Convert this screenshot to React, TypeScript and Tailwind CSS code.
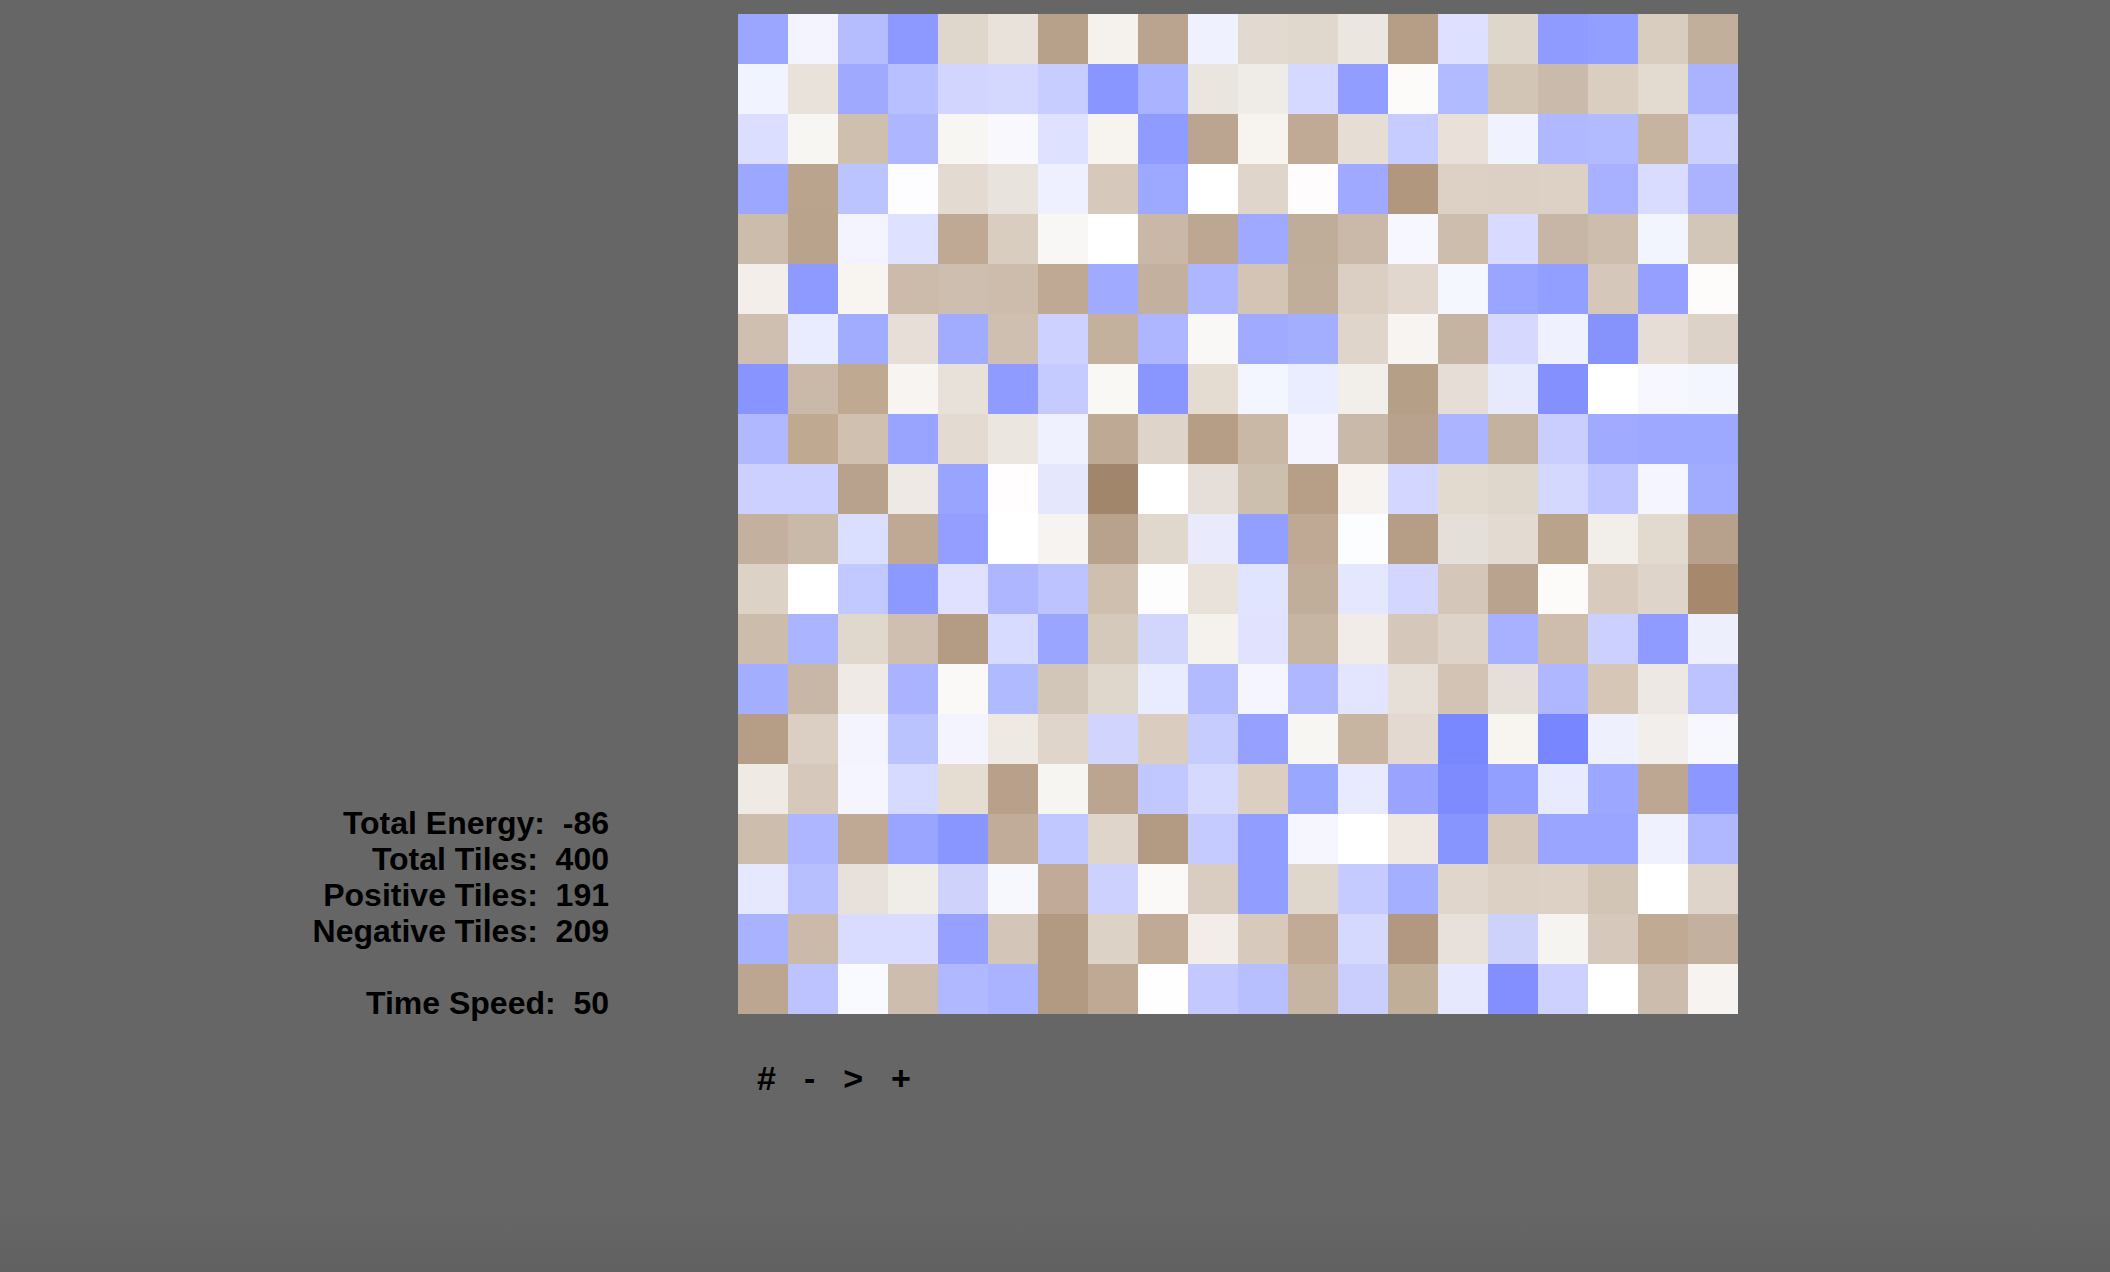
const tiles = [
  "bg-[#9aa6ff]", "bg-[#f3f4ff]", "bg-[#b5bdff]", "bg-[#8d99ff]", "bg-[#dfd6cc]", "bg-[#e8e2db]", "bg-[#b8a18a]", "bg-[#f5f2ed]", "bg-[#bba48f]", "bg-[#eff1ff]", "bg-[#e2dad0]", "bg-[#e0d8cd]", "bg-[#ebe6e0]", "bg-[#b59d86]", "bg-[#dde0ff]", "bg-[#dfd6cb]", "bg-[#8f9bff]", "bg-[#939fff]", "bg-[#d9cdc0]", "bg-[#c1af9c]",
  "bg-[#f1f3ff]", "bg-[#e9e2db]", "bg-[#9faaff]", "bg-[#b9c0ff]", "bg-[#d2d6ff]", "bg-[#d4d8ff]", "bg-[#c8cdff]", "bg-[#8a96ff]", "bg-[#aab3ff]", "bg-[#ebe5df]", "bg-[#efebe6]", "bg-[#d5d9ff]", "bg-[#929eff]", "bg-[#fcfbf9]", "bg-[#b1bbff]", "bg-[#d3c5b6]", "bg-[#cabaab]", "bg-[#dacec0]", "bg-[#e3dad0]", "bg-[#abb3ff]",
  "bg-[#dbdeff]", "bg-[#f8f6f3]", "bg-[#cfbfaf]", "bg-[#adb6ff]", "bg-[#f8f6f3]", "bg-[#f9f9fd]", "bg-[#dee1ff]", "bg-[#f7f4ef]", "bg-[#8f9bff]", "bg-[#bba490]", "bg-[#f7f4f0]", "bg-[#c0aa95]", "bg-[#e6ded4]", "bg-[#c6ccff]", "bg-[#e8e0d9]", "bg-[#f0f2fe]", "bg-[#b0b9ff]", "bg-[#b2bbff]", "bg-[#c6b4a1]", "bg-[#cbd0ff]",
  "bg-[#9ca8ff]", "bg-[#baa48d]", "bg-[#bcc4ff]", "bg-[#fdfdff]", "bg-[#e3dbd2]", "bg-[#e9e3dd]", "bg-[#eef0ff]", "bg-[#d6c9bb]", "bg-[#9da9ff]", "bg-[#ffffff]", "bg-[#dfd5ca]", "bg-[#fefcfc]", "bg-[#9ea9ff]", "bg-[#b0977e]", "bg-[#ddd1c5]", "bg-[#dcd0c4]", "bg-[#ddd1c5]", "bg-[#a8b1ff]", "bg-[#d9dcff]", "bg-[#abb3ff]",
  "bg-[#ccbcab]", "bg-[#b9a38c]", "bg-[#f3f4ff]", "bg-[#dee1ff]", "bg-[#bfa994]", "bg-[#d9cdc0]", "bg-[#f9f7f5]", "bg-[#ffffff]", "bg-[#c9b8a7]", "bg-[#bda692]", "bg-[#9ea9ff]", "bg-[#bfac99]", "bg-[#cab9a8]", "bg-[#f7f8ff]", "bg-[#cdbdad]", "bg-[#d8dbff]", "bg-[#c7b5a5]", "bg-[#cdbdad]", "bg-[#f3f5fe]", "bg-[#d2c6b8]",
  "bg-[#f4eeea]", "bg-[#8e9aff]", "bg-[#f8f4f0]", "bg-[#ccbbab]", "bg-[#cebeaf]", "bg-[#cdbcac]", "bg-[#bfa995]", "bg-[#a0abff]", "bg-[#c3b09e]", "bg-[#adb6ff]", "bg-[#d3c4b5]", "bg-[#c1ae9a]", "bg-[#dbcfc3]", "bg-[#e1d7ce]", "bg-[#f5f7ff]", "bg-[#99a5ff]", "bg-[#939fff]", "bg-[#d5c8ba]", "bg-[#959fff]", "bg-[#fefbfb]",
  "bg-[#cfbfb0]", "bg-[#e9ebff]", "bg-[#a1acff]", "bg-[#e6ded7]", "bg-[#a1acff]", "bg-[#cfbfb0]", "bg-[#ccd1ff]", "bg-[#c3b09d]", "bg-[#adb6ff]", "bg-[#faf8f7]", "bg-[#a0abff]", "bg-[#a3aeff]", "bg-[#dfd5ca]", "bg-[#f8f4f1]", "bg-[#c6b4a2]", "bg-[#d6d9fd]", "bg-[#f0f1ff]", "bg-[#8793fc]", "bg-[#e6ddd6]", "bg-[#ddd2c7]",
  "bg-[#8894ff]", "bg-[#cab9a9]", "bg-[#bfa991]", "bg-[#f8f4f1]", "bg-[#e7e1da]", "bg-[#8f9bff]", "bg-[#c5caff]", "bg-[#f9f8f5]", "bg-[#8a96ff]", "bg-[#e4dbd1]", "bg-[#f3f6ff]", "bg-[#e9edff]", "bg-[#f2eeea]", "bg-[#b69f87]", "bg-[#e5ddd6]", "bg-[#e7e9fd]", "bg-[#8590ff]", "bg-[#ffffff]", "bg-[#f7f8ff]", "bg-[#f3f6fe]",
  "bg-[#b0b9ff]", "bg-[#bfa991]", "bg-[#cfc0b0]", "bg-[#98a4ff]", "bg-[#e3dbd1]", "bg-[#ece6e0]", "bg-[#eff1fe]", "bg-[#bea995]", "bg-[#ded4c9]", "bg-[#b69e86]", "bg-[#c8b8a5]", "bg-[#f3f4ff]", "bg-[#c9b9a8]", "bg-[#b8a18d]", "bg-[#abb4ff]", "bg-[#c4b2a0]", "bg-[#c9ceff]", "bg-[#a0aaff]", "bg-[#9ea8ff]", "bg-[#9da8ff]",
  "bg-[#cbd0ff]", "bg-[#cbd0ff]", "bg-[#b8a18d]", "bg-[#eee9e4]", "bg-[#98a4ff]", "bg-[#fffdfe]", "bg-[#e5e8fd]", "bg-[#a2866b]", "bg-[#ffffff]", "bg-[#e6dfd9]", "bg-[#cdbfae]", "bg-[#b69e87]", "bg-[#f6f3f0]", "bg-[#d3d7ff]", "bg-[#e2d9cf]", "bg-[#e0d7cc]", "bg-[#d4d8ff]", "bg-[#bfc5ff]", "bg-[#f4f5ff]", "bg-[#a1acff]",
  "bg-[#c3b09e]", "bg-[#c9b9a8]", "bg-[#dadeff]", "bg-[#bfa995]", "bg-[#939eff]", "bg-[#ffffff]", "bg-[#f6f3f0]", "bg-[#b9a28d]", "bg-[#e0d7cd]", "bg-[#e9ebfd]", "bg-[#939fff]", "bg-[#c0a994]", "bg-[#fcfdff]", "bg-[#b59e85]", "bg-[#e5dfd9]", "bg-[#e3dbd2]", "bg-[#b9a38b]", "bg-[#f2efeb]", "bg-[#e2d9cf]", "bg-[#b7a08c]",
  "bg-[#dcd2c6]", "bg-[#ffffff]", "bg-[#c2c9ff]", "bg-[#8c99ff]", "bg-[#dfe1ff]", "bg-[#adb6ff]", "bg-[#bcc3ff]", "bg-[#cfbfae]", "bg-[#fdfdfe]", "bg-[#e8e2db]", "bg-[#e0e4ff]", "bg-[#c0ae9b]", "bg-[#e5e7ff]", "bg-[#d3d7ff]", "bg-[#d4c6b9]", "bg-[#b9a38e]", "bg-[#fdfbf9]", "bg-[#d8cbbe]", "bg-[#ded4c9]", "bg-[#a6896d]",
  "bg-[#ccbcac]", "bg-[#abb5ff]", "bg-[#e1d8cd]", "bg-[#cfbfb0]", "bg-[#b49c84]", "bg-[#d7dbff]", "bg-[#9aa5ff]", "bg-[#d5c9bb]", "bg-[#d2d5fc]", "bg-[#f5f2ee]", "bg-[#e1e3fe]", "bg-[#c6b5a2]", "bg-[#f1ece7]", "bg-[#d5c7b9]", "bg-[#ddd3c9]", "bg-[#a7b1ff]", "bg-[#cebdad]", "bg-[#ccd0ff]", "bg-[#8f9bfe]", "bg-[#edeffd]",
  "bg-[#a3aeff]", "bg-[#c8b7a6]", "bg-[#efeae5]", "bg-[#a9b3ff]", "bg-[#faf9f7]", "bg-[#b0baff]", "bg-[#d2c6b9]", "bg-[#dfd6cc]", "bg-[#e9ebfe]", "bg-[#b3bbff]", "bg-[#f4f5ff]", "bg-[#afb8ff]", "bg-[#e3e5fe]", "bg-[#e6dfd7]", "bg-[#d2c3b4]", "bg-[#e6dfd9]", "bg-[#afb7ff]", "bg-[#d5c6b5]", "bg-[#ede8e3]", "bg-[#bcc3ff]",
  "bg-[#b69e86]", "bg-[#dacfc2]", "bg-[#f3f4fe]", "bg-[#bbc3ff]", "bg-[#f3f4fe]", "bg-[#efe9e4]", "bg-[#dfd5cb]", "bg-[#d1d5fe]", "bg-[#dacdc0]", "bg-[#c7ccfe]", "bg-[#96a1ff]", "bg-[#f7f6f3]", "bg-[#c7b5a2]", "bg-[#e3d9d0]", "bg-[#7a88ff]", "bg-[#f8f5f1]", "bg-[#7886ff]", "bg-[#eef0fd]", "bg-[#f2eeeb]", "bg-[#f7f8fe]",
  "bg-[#f0eae5]", "bg-[#d6c9bb]", "bg-[#f4f5fe]", "bg-[#d6dafe]", "bg-[#e5ddd2]", "bg-[#b8a08b]", "bg-[#f7f5f1]", "bg-[#bca590]", "bg-[#c1c7ff]", "bg-[#d5d9fd]", "bg-[#dccfc2]", "bg-[#9aa7ff]", "bg-[#e8ebfe]", "bg-[#9aa4ff]", "bg-[#7e8bff]", "bg-[#939fff]", "bg-[#e8ebfe]", "bg-[#9ca7ff]", "bg-[#bea792]", "bg-[#8c98ff]",
  "bg-[#cdbdac]", "bg-[#adb6ff]", "bg-[#bfa994]", "bg-[#9aa5ff]", "bg-[#8a96ff]", "bg-[#c0ac98]", "bg-[#c1c7ff]", "bg-[#dfd5ca]", "bg-[#b39a82]", "bg-[#c6cbff]", "bg-[#929eff]", "bg-[#f5f6ff]", "bg-[#ffffff]", "bg-[#eee7e2]", "bg-[#8795ff]", "bg-[#d5c8ba]", "bg-[#9aa5ff]", "bg-[#9aa5ff]", "bg-[#eff2fe]", "bg-[#b0b8ff]",
  "bg-[#e6e8fe]", "bg-[#b7bfff]", "bg-[#e8e0da]", "bg-[#f0ece7]", "bg-[#cfd3fc]", "bg-[#f7f8fe]", "bg-[#c1aa97]", "bg-[#cdd1fe]", "bg-[#faf9f7]", "bg-[#d9ccc0]", "bg-[#929eff]", "bg-[#e0d7cc]", "bg-[#c5cbfe]", "bg-[#a5afff]", "bg-[#e0d6cb]", "bg-[#dcd0c4]", "bg-[#ddd1c5]", "bg-[#d3c5b6]", "bg-[#ffffff]", "bg-[#ded4c9]",
  "bg-[#a8b2ff]", "bg-[#cbbaaa]", "bg-[#d9dcfe]", "bg-[#d9dcfe]", "bg-[#96a1ff]", "bg-[#d3c5b7]", "bg-[#b29981]", "bg-[#ddd2c6]", "bg-[#c0aa95]", "bg-[#f2ede9]", "bg-[#d7cabc]", "bg-[#c1aa96]", "bg-[#d5d9fe]", "bg-[#b29880]", "bg-[#e8e0da]", "bg-[#cdd2fb]", "bg-[#f6f4f1]", "bg-[#d6c9bb]", "bg-[#c0aa94]", "bg-[#c3b09e]",
  "bg-[#bca591]", "bg-[#bcc3ff]", "bg-[#f9faff]", "bg-[#ccbdae]", "bg-[#b0b8ff]", "bg-[#aab3ff]", "bg-[#b29981]", "bg-[#c0a994]", "bg-[#fefdff]", "bg-[#c3c9ff]", "bg-[#b8bfff]", "bg-[#c7b5a3]", "bg-[#c9cefd]", "bg-[#c1ae99]", "bg-[#e6e8fe]", "bg-[#848fff]", "bg-[#ccd1fd]", "bg-[#ffffff]", "bg-[#ccbcad]", "bg-[#f6f3f0]",
]

const stats = [
  ["Total Energy:", "-86"],
  ["Total Tiles:", "400"],
  ["Positive Tiles:", "191"],
  ["Negative Tiles:", "209"],
]

function App() {
  return (
    <div className="min-h-screen bg-linear-to-b from-[#666666] from-[95%] to-[#616161] text-black font-['Liberation_Sans',Arial,sans-serif] font-bold flex items-start pt-[14px]">
      <div className="w-[609px] shrink-0 pt-[791px] text-right text-[32px] leading-[36px]">
        {stats.map(([label, value]) => (
          <p key={label} className="whitespace-pre">{label}  {value}</p>
        ))}
        <p className="whitespace-pre mt-[36px]">Time Speed:  50</p>
      </div>

      <div className="ml-[129px] w-[1000px]">
        <div className="grid grid-cols-20 auto-rows-[50px]">
          {tiles.map((tile, i) => (
            <div key={i} className={tile} />
          ))}
        </div>
        <div className="flex items-center gap-7 mt-[46px] pl-[19px] text-[34px] leading-[36px]">
          <button>#</button>
          <button>-</button>
          <button>&gt;</button>
          <button>+</button>
        </div>
      </div>
    </div>
  )
}

export default App
